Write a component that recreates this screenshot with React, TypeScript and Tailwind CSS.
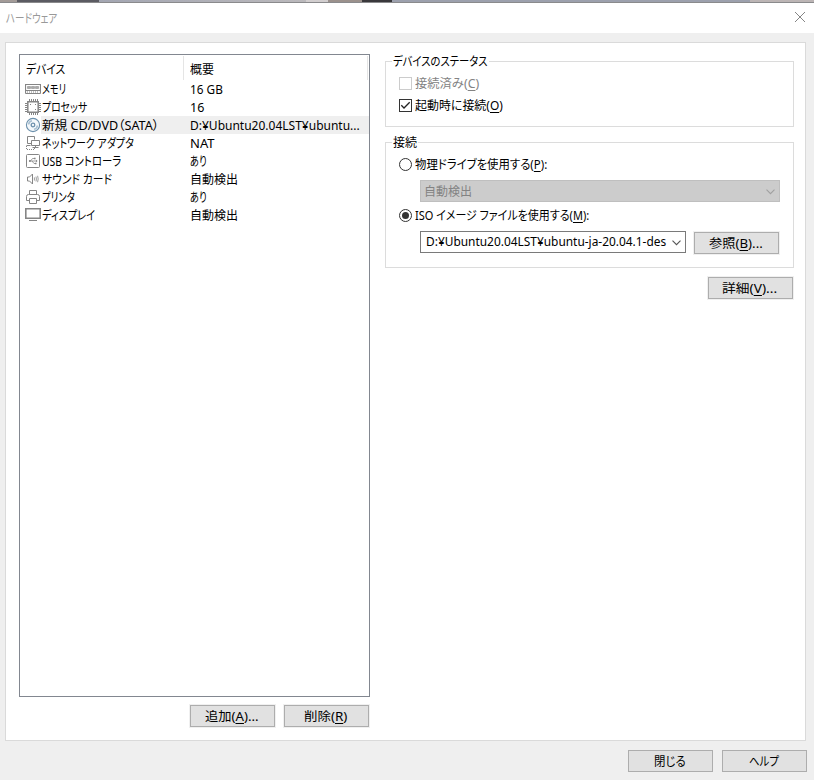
import { useLayoutEffect, useRef, useState, type ReactNode } from "react";
import clsx from "clsx";

// Condenses a label horizontally so that it fills exactly `width` pixels.
function Label({ width, className, children }: { width: number; className?: string; children: ReactNode }) {
  const ref = useRef<HTMLSpanElement>(null);
  const [scale, setScale] = useState(1);

  useLayoutEffect(() => {
    if (ref.current) setScale(width / ref.current.offsetWidth);
  }, [width]);

  return (
    <span className={clsx("block shrink-0 whitespace-nowrap text-left leading-[18px]", className)} style={{ width }}>
      <span ref={ref} className="inline-block origin-left" style={{ transform: `scaleX(${scale})` }}>
        {children}
      </span>
    </span>
  );
}

function Key({ children }: { children: string }) {
  return (
    <>
      (<span className="underline decoration-1 underline-offset-2">{children}</span>)
    </>
  );
}

function Button({ width, ring = true, children }: { width: number; ring?: boolean; children: ReactNode }) {
  return (
    <button
      type="button"
      className={clsx(
        "flex h-[22px] w-[85px] shrink-0 items-center justify-center border border-[#adadad] bg-[#e1e1e1]",
        ring && "ring-1 ring-[#f0f0f0]"
      )}
    >
      <Label width={width} className="mr-[2px] mt-px">{children}</Label>
    </button>
  );
}

function Group({ title, titleWidth, className, children }: { title: string; titleWidth: number; className?: string; children: ReactNode }) {
  return (
    <section className={clsx("border border-[#dcdcdc]", className)}>
      <div className="-mt-[9px] ml-[6px] flex h-[18px] w-fit bg-white px-px">
        <Label width={titleWidth}>{title}</Label>
      </div>
      {children}
    </section>
  );
}

function Radio({ checked = false }: { checked?: boolean }) {
  return (
    <span className="-mt-[2px] flex size-[13px] shrink-0 items-center justify-center rounded-full border border-[#333] bg-white">
      {checked && <span className="size-[7px] rounded-full bg-[#333]" />}
    </span>
  );
}

function Chevron({ className }: { className: string }) {
  return (
    <svg className={clsx("shrink-0", className)} width="9" height="6" viewBox="0 0 9 6" fill="none" stroke="currentColor" strokeWidth="1.1">
      <path d="M.5.7 4.5 4.7 8.5.7" />
    </svg>
  );
}

const icons = {
  memory: (
    <>
      <path d="M.5 3.5h15v6H.5zM.5 12.5h15M.5 9.5v3M15.5 9.5v3" strokeWidth="1.2" />
      <path d="M2.5 5.5h3v2h-3zM6.5 5.5h3v2h-3zM10.5 5.5h3v2h-3z" fill="#aaa" stroke="#aaa" />
      <path d="M2 11h12" strokeDasharray="1 1" />
    </>
  ),
  cpu: (
    <>
      <path d="M2.8 2.8h10.4v10.4H2.8z" strokeWidth="1.5" />
      <path d="M4.5 0v2M6.5 0v2M8.5 0v2M10.5 0v2M12.5 0v2M4.5 14v2M6.5 14v2M8.5 14v2M10.5 14v2M12.5 14v2M0 4.5h2M0 6.5h2M0 8.5h2M0 10.5h2M0 12.5h2M14 4.5h2M14 6.5h2M14 8.5h2M14 10.5h2M14 12.5h2" />
      <path d="M5 5.5h1M10 5.5h1M10 10.5h1" />
    </>
  ),
  disc: (
    <g stroke="#6d91ad">
      <circle cx="8" cy="8" r="6.6" fill="#f4f8fb" strokeWidth="1.1" />
      <circle cx="8" cy="8" r="1.8" strokeWidth="1.3" />
      <path d="M3.6 7.5A4.4 4.4 0 0 1 7 3.7M12.4 8.5A4.4 4.4 0 0 1 9 12.3" stroke="#a9c0d2" strokeWidth="1.6" />
    </g>
  ),
  network: (
    <>
      <path d="M6.5 8.5h-4v-7h7v3M1.5 10.5h4" />
      <path d="M6.5 5.5h8v5h-8zM10.5 10.5v2M7.5 12.5h6" />
      <path d="M1.5 11v3.5h8V13" strokeDasharray="1 1" />
    </>
  ),
  usb: (
    <>
      <rect x="1.5" y="1.5" width="13" height="13" rx="1" />
      <path d="M4 8h8M5.5 8l2-2.5h2M7 8l2 2.5h1.5" strokeWidth=".8" />
      <circle cx="4.9" cy="8" r="1" fill="currentColor" stroke="none" />
      <path d="M9 4.8h1.6v1.4H9zM10 9.8h1.5v1.4H10zM11 6.8 12.6 8 11 9.2z" fill="currentColor" stroke="none" />
    </>
  ),
  sound: (
    <>
      <path d="M2.5 6h2l3-3v10l-3-3h-2z" />
      <path d="M9.4 6.4v3.2M11 5.6Q11.8 8 11 10.4M12.6 4.8Q13.8 8 12.6 11.2" strokeWidth=".8" />
    </>
  ),
  printer: (
    <>
      <path d="M4.5 5.5v-4h7v4M4.5 11.5h-3v-4q0-2 2-2h9q2 0 2 2v4h-3" />
      <path d="M4.5 9.5h7v5h-7z" />
    </>
  ),
  display: (
    <>
      <path d="M.8 1.8h14.4v9.4H.8z" strokeWidth="1.6" />
      <path d="M4 13.5h8" />
    </>
  ),
};

type Device = {
  icon: keyof typeof icons;
  name: string;
  nameWidth: number;
  summary: string;
  summaryWidth: number;
  selected?: boolean;
};

const devices: Device[] = [
  { icon: "memory", name: "メモリ", nameWidth: 24, summary: "16 GB", summaryWidth: 33 },
  { icon: "cpu", name: "プロセッサ", nameWidth: 45, summary: "16", summaryWidth: 14 },
  { icon: "disc", name: "新規 CD/DVD（SATA）", nameWidth: 117, summary: "D:¥Ubuntu20.04LST¥ubuntu...", summaryWidth: 170, selected: true },
  { icon: "network", name: "ネットワーク アダプタ", nameWidth: 92, summary: "NAT", summaryWidth: 25 },
  { icon: "usb", name: "USB コントローラ", nameWidth: 79, summary: "あり", summaryWidth: 17 },
  { icon: "sound", name: "サウンド カード", nameWidth: 70, summary: "自動検出", summaryWidth: 48 },
  { icon: "printer", name: "プリンタ", nameWidth: 33, summary: "あり", summaryWidth: 17 },
  { icon: "display", name: "ディスプレイ", nameWidth: 53, summary: "自動検出", summaryWidth: 48 },
];

function DeviceRow({ device }: { device: Device }) {
  return (
    <li className="flex h-[18px] pl-[5px]">
      <svg className="mt-px shrink-0 text-[#858585]" width="16" height="16" viewBox="0 0 16 16" fill="none" stroke="currentColor">
        {icons[device.icon]}
      </svg>
      <div className={clsx("flex flex-1 pl-px pt-px", device.selected && "bg-[#efefef]")}>
        <div className="w-[148px] shrink-0">
          <Label width={device.nameWidth}>{device.name}</Label>
        </div>
        <Label width={device.summaryWidth}>{device.summary}</Label>
      </div>
    </li>
  );
}

export default function App() {
  return (
    <div className="flex h-[780px] w-[814px] flex-col overflow-hidden bg-[#efefef] font-['Noto_Sans','Noto_Sans_CJK_JP',sans-serif] text-[12.5px] text-black [font-feature-settings:'palt']">
      {/* Sliver of the window behind the dialog */}
      <div className="flex h-[3px] shrink-0 border-b border-[#8a8a8c]">
        <div className="w-[17px] bg-[#a39b98]" />
        <div className="w-[82px] bg-[#5b5b62]" />
        <div className="w-[207px] bg-gradient-to-r from-[#a3a6b2] to-[#bbb9bc]" />
        <div className="w-[22px] bg-[#d2cecf]" />
        <div className="w-[34px] bg-[#9b918c]" />
        <div className="w-[30px] bg-[#39383b]" />
        <div className="w-[358px] bg-[#9ca0ad]" />
        <div className="flex-1 bg-[#bcb5b5]" />
      </div>

      <header className="flex h-[30px] shrink-0 items-center justify-between bg-white pl-[6px] pr-[8px] text-[#999]">
        <Label width={51} className="mt-px">ハードウェア</Label>
        <svg className="mt-[-2px]" width="12" height="12" viewBox="0 0 12 12" stroke="#858585">
          <path d="M1 1l10 10M11 1 1 11" />
        </svg>
      </header>

      <main className="ml-[5px] mt-[9px] flex h-[699px] w-[801px] shrink-0 border border-[#dadada] bg-white pl-[13px] pt-[11px]">
        <div className="w-[351px] shrink-0">
          <div className="h-[643px] border border-[#828790]">
            <div className="flex h-[25px] pt-px">
              <div className="w-[164px] border-r border-[#e5e5e5] pl-[6px] pt-[5px]">
                <Label width={39}>デバイス</Label>
              </div>
              <div className="w-[184px] border-r border-[#e5e5e5] pl-[6px] pt-[5px]">
                <Label width={24}>概要</Label>
              </div>
            </div>
            <ul>
              {devices.map((device) => (
                <DeviceRow key={device.name} device={device} />
              ))}
            </ul>
          </div>
          <div className="mt-[8px] flex justify-end gap-[9px] pr-px">
            <Button width={54}>追加<Key>A</Key>...</Button>
            <Button width={43}>削除<Key>R</Key></Button>
          </div>
        </div>

        <div className="ml-[15px] w-[409px] pt-[7px]">
          <Group title="デバイスのステータス" titleWidth={95} className="h-[66px]">
            <div className="pl-[13px] pt-[2px]">
              <div className="flex h-[22px] items-center gap-[3px] text-[#838383]">
                <span className="-mt-px size-[13px] border border-[#ccc]" />
                <Label width={64}>接続済み<Key>C</Key></Label>
              </div>
              <div className="flex h-[22px] items-center gap-[3px]">
                <span className="-mt-px size-[13px] border border-[#333]">
                  <svg width="11" height="11" viewBox="0 0 11 11" fill="none" stroke="#222" strokeWidth="1.3">
                    <path d="M1.3 5.3 4 8 9.7 2.3" />
                  </svg>
                </span>
                <Label width={88}>起動時に接続<Key>O</Key></Label>
              </div>
            </div>
          </Group>

          <Group title="接続" titleWidth={24} className="mt-[15px] h-[126px]">
            <div className="pl-[13px] pr-[13px] pt-[3px]">
              <div className="flex h-[20px] items-center gap-[3px]">
                <Radio />
                <Label width={132}>物理ドライブを使用する<Key>P</Key>:</Label>
              </div>
              <div className="ml-[21px] mt-[5px] flex h-[22px] w-[360px] items-center justify-between border border-[#bfbfbf] bg-[#ccc] pl-[3px] pr-[4px] text-[#838383]">
                <Label width={48} className="mt-[2px]">自動検出</Label>
                <Chevron className="mt-px text-[#a0a0a0]" />
              </div>
              <div className="mt-[4px] flex h-[20px] items-center gap-[3px]">
                <Radio checked />
                <Label width={174}>ISO イメージ ファイルを使用する<Key>M</Key>:</Label>
              </div>
              <div className="ml-[21px] mt-[5px] flex gap-[8px]">
                <div className="flex h-[22px] w-[266px] items-center justify-between border border-[#7a7a7a] bg-white pl-[5px] pr-[4px]">
                  <Label width={240}>D:¥Ubuntu20.04LST¥ubuntu-ja-20.04.1-des</Label>
                  <Chevron className="mt-px text-[#555]" />
                </div>
                <div className="pt-px">
                  <Button width={54}>参照<Key>B</Key>...</Button>
                </div>
              </div>
            </div>
          </Group>

          <div className="mt-[9px] flex justify-end pr-px">
            <Button width={55}>詳細<Key>V</Key>...</Button>
          </div>
        </div>
      </main>

      <footer className="mt-[9px] flex justify-end gap-[9px] pr-[7px]">
        <Button width={32} ring={false}>閉じる</Button>
        <Button width={30} ring={false}>ヘルプ</Button>
      </footer>
    </div>
  );
}
